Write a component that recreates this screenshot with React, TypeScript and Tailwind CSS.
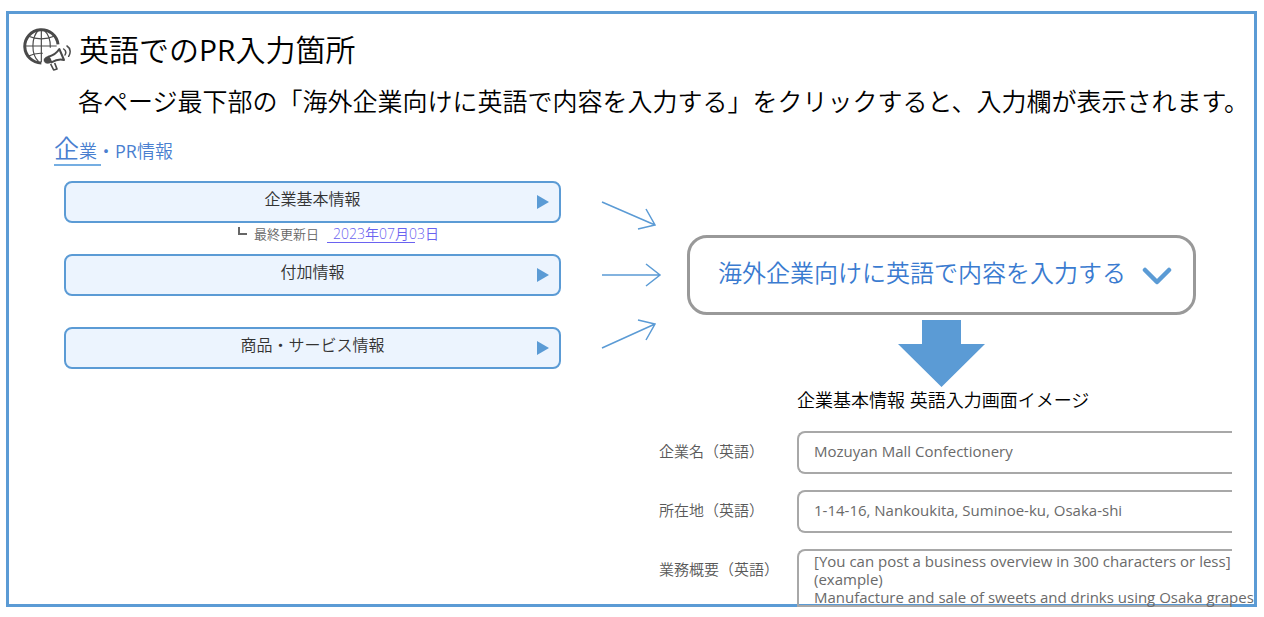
import React from 'react';

interface MenuItem {
  id: string;
  label: string;
  updatedAt?: string;
}

const menuItems: MenuItem[] = [
  { id: 'basic', label: '企業基本情報', updatedAt: '2023年07月03日' },
  { id: 'additional', label: '付加情報' },
  { id: 'products', label: '商品・サービス情報' },
];

const overview = [
  '[You can post a business overview in 300 characters or less]',
  '(example)',
  'Manufacture and sale of sweets and drinks using Osaka grapes',
].join('\n');

const GlobeMegaphoneIcon = () => (
  <svg viewBox="25 25 144 132" className="h-11 w-12 shrink-0" fill="none" stroke="#4a4a4a" aria-hidden="true">
    <path d="M130 74A50 50 0 1 0 80 130" strokeWidth="9" />
    <g strokeWidth="3.5">
      <path d="M80 30V128M30 79H126" />
      <path d="M72 31C50 52 48 104 72 126M88 31C102 44 108 62 107 84" />
      <path d="M42 50C64 60 96 60 118 50M42 109C56 102 70 100 84 101" />
    </g>
    <path d="M102 111C116 107 127 99 134 88L148 121C136 117 124 120 110 128Z" fill="#fff" strokeWidth="6" strokeLinejoin="round" />
    <path d="M103 109L110 128C100 134 90 132 88 124C86 116 93 111 103 109Z" fill="#4a4a4a" />
    <path d="M108 133L117 151L127 148L120 130" fill="#fff" strokeWidth="5" strokeLinejoin="round" />
    <path d="M147 88C153 92 155 99 151 106M157 79C168 86 169 100 162 110" strokeWidth="4.5" strokeLinecap="round" />
  </svg>
);

const ThinArrow: React.FC<{ d: string }> = ({ d }) => (
  <svg viewBox="0 0 64 40" className="h-10 w-16" fill="none" stroke="#5b9bd5" strokeWidth="1.5" aria-hidden="true">
    <path d={d} />
  </svg>
);

const fieldClass =
  'h-[43px] w-full rounded-l-lg border-2 border-r-0 border-[#a8a8a8] pl-[15px] pb-1 text-[15px] font-normal text-[#6a6a6a] outline-none';

const App: React.FC = () => {
  return (
    <div className="bg-white pt-[11px] pr-[7px] pb-[10px] pl-[6px] font-['Open_Sans','Noto_Sans_CJK_JP',sans-serif] font-[350] text-black">
      <main className="border-3 border-[#5b9bd5] pt-[13px]">
        <header>
          <div className="flex items-center gap-2 pl-[14px]">
            <GlobeMegaphoneIcon />
            <h1 className="text-[30px] leading-[45px] whitespace-nowrap">
              英語での<span className="font-normal">PR</span>入力箇所
            </h1>
          </div>
          <p className="mt-[10px] pl-[69px] text-[25px] leading-[38px] whitespace-nowrap">
            各ページ最下部の「海外企業向けに英語で内容を入力する」をクリックすると、入力欄が表示されます。
          </p>
        </header>

        <h2 className="relative mt-3 ml-[45px] h-8 text-[18px] leading-8 whitespace-nowrap text-[#4a7fd0] after:absolute after:top-full after:left-0 after:h-[2px] after:w-[47px] after:bg-[#75aee2]">
          <span className="text-[25px]">企</span>業・<span className="font-normal">PR</span>情報
        </h2>

        <div className="mt-[17px] flex items-start pl-[55px]">
          <nav className="flex-1" aria-label="企業・PR情報">
            {menuItems.map((item, i) => (
              <div key={item.id}>
                <button
                  type="button"
                  className="relative flex h-[42px] w-full items-center justify-center rounded-lg border-2 border-[#5b9bd5] bg-[#ecf4fe] pb-[6px] text-[16px] text-[#333]"
                >
                  {item.label}
                  <svg viewBox="0 0 12 14" className="absolute top-3 right-[10px] h-[14px] w-3" fill="#5b9bd5" aria-hidden="true">
                    <path d="M0 0L12 7L0 14Z" />
                  </svg>
                </button>
                {i < menuItems.length - 1 && (
                  <div className="flex h-[31px] justify-center pl-[52px] text-[13px] leading-[22px] text-[#666]">
                    {item.updatedAt && (
                      <>
                        <svg viewBox="0 0 10 10" className="mt-1 mr-[6px] h-[10px] w-[10px]" fill="none" stroke="#666" strokeWidth="2" aria-hidden="true">
                          <path d="M1 0V7H9" />
                        </svg>
                        <span>最終更新日</span>
                        <a
                          href="#updated"
                          className="relative ml-2 h-[20px] pl-[6px] text-[14px] text-[#6a62f0] after:absolute after:bottom-0 after:left-0 after:h-px after:w-[88px] after:bg-[#6a62f0]"
                        >
                          {item.updatedAt}
                        </a>
                      </>
                    )}
                  </div>
                )}
              </div>
            ))}
          </nav>

          <div className="ml-[39px] flex flex-col gap-[19px] pt-[15px]">
            <ThinArrow d="M2 6L55 29M46 13L55 29L38 33" />
            <ThinArrow d="M2 20H60M46 9L60 20L46 31" />
            <ThinArrow d="M2 34L55 10M38 6L55 10L46 26" />
          </div>

          <div className="mt-[54px] mr-[58px] ml-[23px] flex w-[509px] flex-col items-center">
            <button
              type="button"
              className="flex h-20 w-full items-center justify-between rounded-[20px] border-3 border-[#999] pr-[21px] pb-1 pl-7 text-[24px] whitespace-nowrap text-[#3a7bd0]"
            >
              海外企業向けに英語で内容を入力する
              <svg viewBox="0 0 30 18" className="mt-[6px] h-[18px] w-[30px]" fill="none" stroke="#5b9bd5" strokeWidth="4.5" strokeLinecap="round" strokeLinejoin="round" aria-hidden="true">
                <path d="M3 3L15 15L27 3" />
              </svg>
            </button>
            <svg viewBox="0 0 87 67" className="mt-[5px] h-[67px] w-[87px]" fill="#5b9bd5" aria-hidden="true">
              <path d="M24 0H63V24H87L43.500 67L0 24H24Z" />
            </svg>
          </div>
        </div>

        <form className="mr-[22px] -mb-[3px] ml-auto w-[573px]">
          <h3 className="pl-[138px] text-[18px] leading-[26px] whitespace-nowrap">企業基本情報 英語入力画面イメージ</h3>
          <div className="mt-[18px] grid grid-cols-[138px_minmax(0,1fr)] gap-y-4 text-[15px] text-[#595959]">
            <label htmlFor="name-en" className="leading-10">企業名（英語）</label>
            <input id="name-en" type="text" defaultValue="Mozuyan Mall Confectionery" className={fieldClass} />

            <label htmlFor="address-en" className="leading-10">所在地（英語）</label>
            <input id="address-en" type="text" defaultValue="1-14-16, Nankoukita, Suminoe-ku, Osaka-shi" className={fieldClass} />

            <label htmlFor="overview-en" className="leading-10">業務概要（英語）</label>
            <div className="h-[58px] rounded-tl-lg border-2 border-r-0 border-[#a8a8a8]">
              <textarea
                id="overview-en"
                defaultValue={overview}
                className="block h-[56px] w-[calc(100%+22px)] resize-none overflow-hidden pt-px pl-[15px] text-[15px] leading-[18px] font-normal whitespace-pre text-[#6a6a6a] outline-none"
              />
            </div>
          </div>
        </form>
      </main>
    </div>
  );
};

export default App;
